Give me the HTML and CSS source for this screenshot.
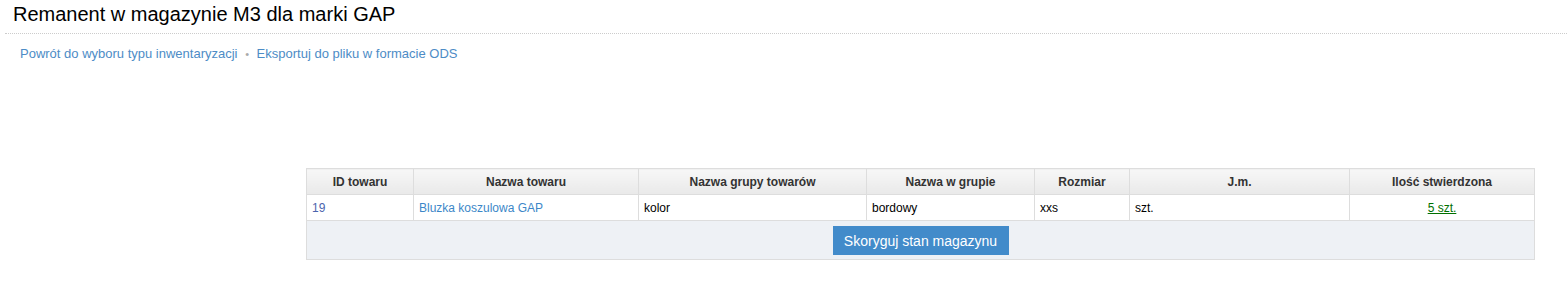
FILE: index.html
```html
<!DOCTYPE html>
<html lang="pl">
<head>
    <meta charset="UTF-8">
    <title>Remanent w magazynie M3 dla marki GAP</title>
    <link rel="stylesheet" href="styles.css">
</head>
<body>
    <div class="page">
        <h1 class="title">Remanent w magazynie M3 dla marki GAP</h1>
        <div class="links">
            <a href="#">Powrót do wyboru typu inwentaryzacji</a>
            <span class="sep">•</span>
            <a href="#">Eksportuj do pliku w formacie ODS</a>
        </div>

        <table class="stock">
            <colgroup>
                <col style="width: 107px">
                <col style="width: 225px">
                <col style="width: 228px">
                <col style="width: 168px">
                <col style="width: 95px">
                <col style="width: 220px">
                <col>
            </colgroup>
            <thead>
                <tr>
                    <th>ID towaru</th>
                    <th>Nazwa towaru</th>
                    <th>Nazwa grupy towarów</th>
                    <th>Nazwa w grupie</th>
                    <th>Rozmiar</th>
                    <th>J.m.</th>
                    <th>Ilość stwierdzona</th>
                </tr>
            </thead>
            <tbody>
                <tr>
                    <td class="id">19</td>
                    <td><a href="#">Bluzka koszulowa GAP</a></td>
                    <td>kolor</td>
                    <td>bordowy</td>
                    <td>xxs</td>
                    <td>szt.</td>
                    <td class="qty"><a href="#">5 szt.</a></td>
                </tr>
            </tbody>
            <tfoot>
                <tr>
                    <td colspan="7"><button class="btn">Skoryguj stan magazynu</button></td>
                </tr>
            </tfoot>
        </table>
    </div>
</body>
</html>
```

FILE: styles.css
```css
body {
    margin: 0;
    font-family: "Liberation Sans", Arial, sans-serif;
    background: #fff;
    color: #000;
}

.page {
    padding: 0 0 0 5px;
}

.title {
    margin: 0;
    padding: 3px 0 8px 8px;
    font-size: 20px;
    font-weight: normal;
    line-height: 22px;
    border-bottom: 1px dotted #ccc;
}

.links {
    padding: 12px 0 0 15px;
    font-size: 13px;
    line-height: 16px;
}

.links a {
    color: #4d8cc6;
    text-decoration: none;
}

.links .sep {
    color: #aaa;
    margin: 0 4px;
    font-size: 11px;
}

.stock {
    margin: 106px 0 0 301px;
    width: 1229px;
    table-layout: fixed;
    border-collapse: collapse;
    font-size: 12px;
}

.stock th,
.stock td {
    border: 1px solid #ddd;
    padding: 0 5px;
    height: 25px;
    text-align: left;
}

.stock th {
    text-align: center;
    font-weight: bold;
    color: #333;
    background: linear-gradient(#f7f7f7, #e9e9e9);
}

.stock td a {
    color: #3c87c8;
    text-decoration: none;
}

.stock td.id {
    color: #4b64ad;
}

.stock td.qty {
    text-align: center;
}

.stock td.qty a {
    color: #007000;
    text-decoration: underline;
}

.stock tfoot td {
    background: #eef1f5;
    text-align: center;
    height: 38px;
    padding: 0;
}

.btn {
    background: #428bca;
    color: #fff;
    border: none;
    font-family: "Liberation Sans", Arial, sans-serif;
    font-size: 14px;
    height: 29px;
    width: 176px;
    margin-top: 1px;
    cursor: pointer;
}
```
